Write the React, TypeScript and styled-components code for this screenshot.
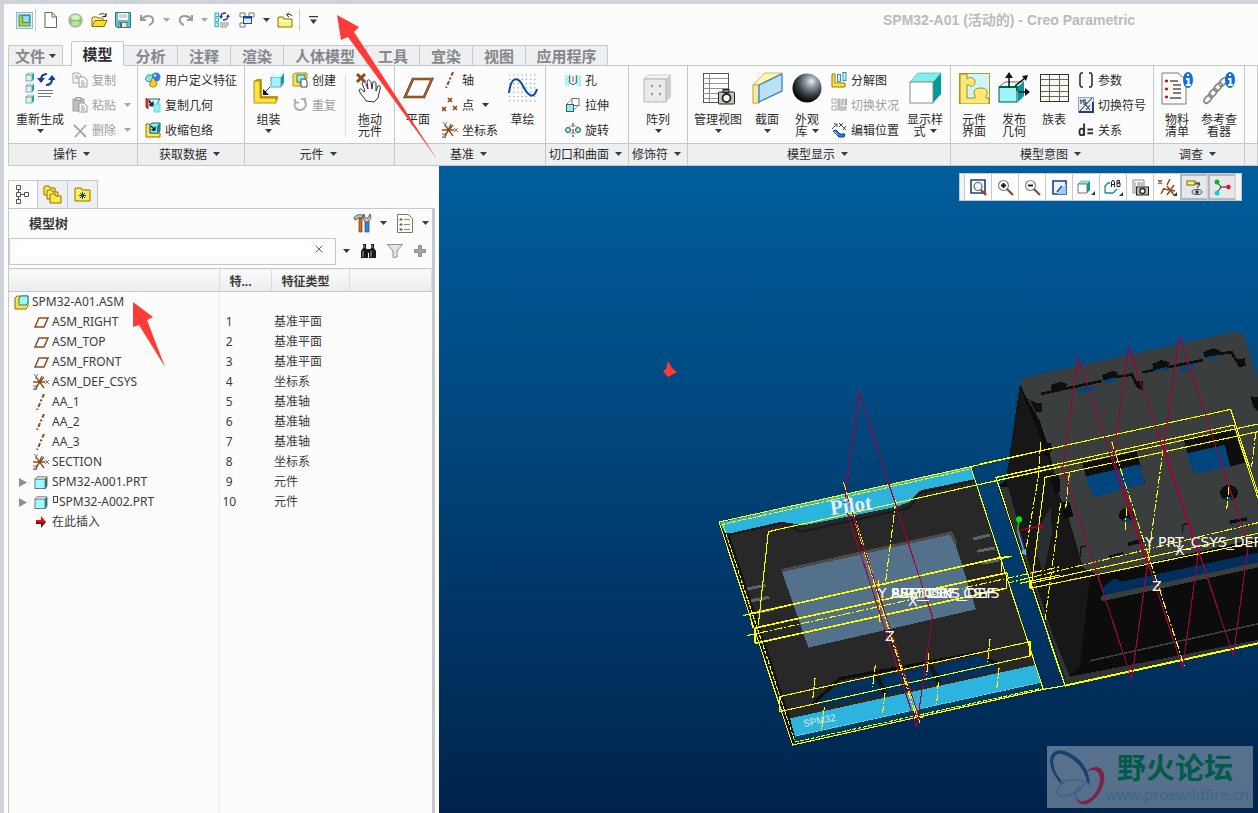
import React from 'react';
import styled, { createGlobalStyle } from 'styled-components';

const sans = '"Noto Sans", "Noto Sans CJK SC", sans-serif';
const cjk = '"Noto Sans CJK SC", "Noto Sans", sans-serif';
const line = '#c6c9cc';

const Global = createGlobalStyle`
  *, *::before, *::after { box-sizing: border-box; }
  body { margin: 0; background: #fcfcfc; overflow: hidden; }
  button, input, table { font: inherit; color: inherit; }
  button { margin: 0; padding: 0; border: 0; background: none; cursor: pointer; }
`;

const Frame = styled.div`
  position: relative;
  display: flex;
  flex-direction: column;
  min-height: 100vh;
  background: #fcfcfc;
  border-top: 4px solid #cdd3d8;
  border-left: 4px solid #cdd3d8;
  box-shadow: inset 1px 1px 0 #fff;
  font: 12px/12px ${cjk};
  color: #2b2b2b;
  overflow: hidden;
`;

/* ---------- title bar ---------- */

const TitleBar = styled.header`
  display: flex;
  align-items: center;
  height: 32px;
  padding-left: 11px;
`;
const QuickButton = styled.button<{ $w?: number }>`
  display: flex;
  align-items: center;
  justify-content: center;
  width: ${(p) => p.$w ?? 24}px;
  height: 22px;
`;
const QuickDivider = styled.span`
  width: 1px;
  height: 22px;
  margin: 0 2px;
  background: #c9cccf;
`;
const WindowTitle = styled.h1`
  flex: 1;
  margin: 0;
  padding-left: 559px;
  white-space: nowrap;
  font: bold 14px/16px "Liberation Sans", "Noto Sans CJK SC", sans-serif;
  color: #b9bbbd;
`;

/* ---------- ribbon ---------- */

const Tabs = styled.nav`
  display: flex;
  align-items: flex-end;
  height: 30px;
  padding-left: 4px;
  margin-bottom: -1px;
  position: relative;
  z-index: 1;
`;
const Tab = styled.button<{ $active?: boolean; $w: number; $gap?: number }>`
  display: flex;
  align-items: center;
  justify-content: center;
  gap: 4px;
  width: ${(p) => p.$w}px;
  height: ${(p) => (p.$active ? 25 : 21)}px;
  margin-right: ${(p) => p.$gap ?? 0}px;
  border: 1px solid ${line};
  border-left-width: ${(p) => (p.$active || p.$gap ? 1 : 0)}px;
  border-bottom-color: ${(p) => (p.$active ? '#fcfcfc' : line)};
  border-radius: ${(p) => (p.$active ? '2px 2px 0 0' : 0)};
  background: ${(p) => (p.$active ? '#fcfcfc' : '#eeeff1')};
  font: bold 15px/18px ${cjk};
  color: ${(p) => (p.$active ? '#2f2f33' : '#85878c')};
  white-space: nowrap;
`;
const Ribbon = styled.section`
  display: flex;
  margin-left: 4px;
  height: 101px;
  border: 1px solid ${line};
  border-right: 0;
`;
const Group = styled.div<{ $w?: number }>`
  display: flex;
  flex-direction: column;
  ${(p) => (p.$w ? `width: ${p.$w}px; flex: none;` : 'flex: 1;')}
  border-right: 1px solid ${line};
`;
const GroupBody = styled.div<{ $pad?: number }>`
  display: flex;
  height: 77px;
  padding-left: ${(p) => p.$pad ?? 0}px;
`;
const GroupLabel = styled.button`
  display: flex;
  align-items: center;
  justify-content: center;
  gap: 6px;
  height: 22px;
  padding: 0 3px 2px 0;
  border-top: 1px solid ${line};
  background: #eeeff1;
  line-height: 18px;
  white-space: nowrap;
`;
const BigTool = styled.button<{ $w: number }>`
  display: flex;
  flex: none;
  flex-direction: column;
  align-items: center;
  width: ${(p) => p.$w}px;
  padding-top: 5px;
  white-space: nowrap;
`;
const BigIcon = styled.span`
  display: flex;
  align-items: center;
  justify-content: center;
  height: 34px;
  margin-bottom: 8px;
`;
const LabelLine = styled.span`
  display: flex;
  align-items: center;
  justify-content: center;
  gap: 4px;
  height: 12px;
`;
const Stack = styled.div<{ $w: number; $pad?: number }>`
  display: flex;
  flex: none;
  flex-direction: column;
  gap: 1px;
  width: ${(p) => p.$w}px;
  padding: 2px 0 0 ${(p) => p.$pad ?? 0}px;
`;
const SmallTool = styled.button<{ $off?: boolean }>`
  display: flex;
  align-items: center;
  gap: 4px;
  height: 24px;
  color: ${(p) => (p.$off ? '#9c9ea0' : 'inherit')};
  white-space: nowrap;
`;
const IconSlot = styled.span`
  display: flex;
  flex: none;
  justify-content: center;
  width: 16px;
`;
const BodyDivider = styled.span`
  width: 1px;
  margin: 8px 0 6px;
  background: #dcdee0;
`;
const CaretSlot = styled.span`
  display: flex;
  margin-left: 4px;
`;

/* ---------- work area ---------- */

const Work = styled.main`
  display: flex;
  flex: 1;
`;
const TreePane = styled.aside`
  display: flex;
  flex: none;
  flex-direction: column;
  width: 427px;
  margin: 14px 4px 0 4px;
`;
const PaneTabs = styled.div`
  display: flex;
  height: 29px;
  margin-bottom: -1px;
`;
const PaneTab = styled.button<{ $active?: boolean }>`
  display: flex;
  align-items: center;
  justify-content: center;
  width: 30px;
  border: 1px solid ${line};
  border-left-width: ${(p) => (p.$active ? 1 : 0)}px;
  border-bottom-color: ${(p) => (p.$active ? '#fcfcfc' : line)};
  background: ${(p) => (p.$active ? '#fcfcfc' : '#eeeff1')};
`;
const PaneBody = styled.div`
  display: flex;
  flex: 1;
  flex-direction: column;
  border: 1px solid ${line};
  border-right: 3px solid ${line};
  border-bottom: 0;
`;
const PaneHead = styled.div`
  display: flex;
  align-items: center;
  height: 28px;
  padding-left: 20px;
`;
const PaneTitle = styled.h2`
  flex: 1;
  margin: 0;
  font: bold 13px/16px ${cjk};
  color: #3a3a3a;
`;
const PaneIcon = styled.button<{ $w: number }>`
  display: flex;
  align-items: center;
  justify-content: center;
  width: ${(p) => p.$w}px;
  height: 22px;
`;
const SearchRow = styled.div`
  display: flex;
  align-items: center;
  height: 28px;
`;
const SearchBox = styled.div`
  display: flex;
  flex: 1;
  align-items: flex-start;
  height: 27px;
  padding: 2px 4px 0 7px;
  border: 1px solid ${line};
`;
const SearchInput = styled.input`
  flex: 1;
  height: 16px;
  border: 0;
  outline: 0;
  background: #fff;
`;
const ClearButton = styled.button`
  width: 20px;
  height: 16px;
`;
const Tree = styled.table`
  width: 100%;
  margin-top: 3px;
  border-top: 1px solid ${line};
  border-collapse: collapse;
  table-layout: fixed;
  font: 12px/20px ${sans};
  color: #3b3b3b;
  th {
    height: 23px;
    padding: 3px 0 0 10px;
    border-bottom: 1px solid ${line};
    border-right: 1px solid #dadcde;
    background: linear-gradient(#fbfbfb, #ebecee);
    text-align: left;
    line-height: 19px;
  }
  td {
    height: 20px;
    padding: 0;
    white-space: nowrap;
  }
  td:first-child { border-right: 1px solid #e8e9eb; }
  td:nth-child(2) { padding-right: 32px; text-align: center; }
  td:nth-child(3) { padding-left: 3px; }
`;
const TreeSpace = styled.div`
  flex: 1;
  width: 211px;
  border-right: 1px solid #e8e9eb;
`;
const NodeName = styled.span<{ $depth: number }>`
  display: flex;
  align-items: center;
  gap: 3px;
  height: 20px;
  padding-left: ${(p) => (p.$depth ? 10 : 5)}px;
`;
const Expander = styled.span`
  display: flex;
  width: 11px;
`;
const Marker = styled.span`
  width: 5px;
  height: 7px;
  margin: 0 -2px 6px 1px;
  border: 1px solid #444;
`;

const Viewport = styled.section`
  position: relative;
  flex: 1;
  min-width: 0;
  overflow: hidden;
  background: linear-gradient(#005e9e, #00234c);
`;
const Scene = styled.svg`
  position: absolute;
  left: 0;
  top: 0;
  display: block;
`;
const ViewTools = styled.div`
  position: absolute;
  top: 7px;
  right: 16px;
  display: flex;
  height: 28px;
  padding: 0 5px 0 4px;
  border: 1px solid ${line};
  background: #f4f4f5;
`;
const ViewTool = styled.button<{ $on?: boolean }>`
  display: flex;
  align-items: center;
  justify-content: center;
  width: ${(p) => (p.$on ? 28 : 27)}px;
  border-left: 1px solid ${line};
  background: #fff;
  ${(p) => p.$on && 'background: #e6e7e9; border: 2px solid #b4b7ba; border-right-color: #d5d7d9;'}
`;
const Watermark = styled.a`
  position: absolute;
  right: 5px;
  bottom: 5px;
  display: flex;
  width: 206px;
  height: 62px;
  background: rgba(255, 255, 255, 0.34);
  text-decoration: none;
`;
const WatermarkLogo = styled.svg`
  flex: none;
  margin-right: -1px;
`;
const WatermarkText = styled.span`
  display: flex;
  flex-direction: column;
  align-items: flex-start;
  color: #3f668a;
  font: 15px/18px ${sans};
  strong {
    margin-left: 12px;
    height: 39px;
    font: bold 29px/40px ${cjk};
    color: #005c48;
    white-space: nowrap;
  }
`;
const Annotations = styled.svg`
  position: absolute;
  left: -4px;
  top: -4px;
  z-index: 5;
  pointer-events: none;
`;

/* ---------- icons ---------- */

const Glyph = styled.svg`
  display: block;
  flex: none;
`;

const Caret = ({ off }: { off?: boolean }) => (
  <Glyph width="7" height="4" viewBox="0 0 7 4" aria-hidden="true">
    <path d="M0 0h7L3.500 4z" fill={off ? '#a5a7a9' : '#3a3a3a'} />
  </Glyph>
);

const cube = (x: number, y: number, s: number) => (
  <g>
    <path d={`M${x} ${y + 2}l2-2h${s}v${s}l-2 2z`} fill="#0aa" />
    <path d={`M${x} ${y + 2}l2-2h${s}l-2 2z`} fill="#e4ffff" stroke="#8a8a8a" strokeWidth=".6" />
    <rect x={x} y={y + 2} width={s} height={s} fill="#c4fcff" stroke="#8a8a8a" strokeWidth=".8" />
  </g>
);
const folder = (x: number, y: number) => (
  <path d={`M${x} ${y + 9}v-8l1-1h4l1 2h5v7z`} fill="#ffe94a" stroke="#8a7200" strokeWidth="1" />
);
const brown = '#8e4a1c';

const icons: Record<string, { w: number; h?: number; box: string; art: React.ReactNode }> = {
  app: { w: 17, box: '0 0 17 17', art: <>
    <rect x=".5" y=".5" width="16" height="16" fill="#dcebf2" stroke="#9db6c4" />
    <rect x="3" y="3" width="11" height="11" fill="#c3d000" stroke="#2b93b0" />
    <rect x="6.500" y="3.500" width="7" height="7" fill="#9fdcea" stroke="#2b93b0" strokeWidth="1.200" /></> },
  newFile: { w: 14, h: 16, box: '0 0 14 16', art: <path d="M1 .5h7l4.500 4.500v10.500H1zM8 .5V5h4.500" fill="#fff" stroke="#666" /> },
  ball: { w: 15, box: '0 0 15 15', art: <>
    <circle cx="7.500" cy="7.500" r="6.500" fill="#8cc76a" stroke="#b4b5b4" strokeWidth="1.500" />
    <ellipse cx="7.500" cy="4.500" rx="4.500" ry="2.500" fill="#d4efc4" /><ellipse cx="7.500" cy="10.500" rx="4" ry="2.300" fill="#b7e39a" /></> },
  open: { w: 17, h: 16, box: '0 0 17 16', art: <>
    <path d="M1 14V6l1-1h4l1 1h5v3" fill="#fff3a0" stroke="#8a7200" />
    <path d="M1 14.500l3-6h12l-3 6z" fill="#ffd92e" stroke="#8a7200" />
    <path d="M8 3c2-2 5-2 7 1M15 1v3.500h-3.500" fill="none" stroke="#222" /></> },
  save: { w: 16, box: '0 0 16 16', art: <>
    <path d="M.5.5h15v15H2l-1.500-1.500z" fill="#5cc3c8" stroke="#2b7f84" />
    <rect x="3" y="1" width="10" height="7" fill="#fff" /><path d="M4 3h8M4 5h8" stroke="#aaa" />
    <rect x="4" y="10.500" width="8" height="5" fill="#e5e5e5" stroke="#555" strokeWidth=".7" /><path d="M6 11v4" stroke="#333" strokeWidth="1.500" /></> },
  undo: { w: 17, h: 14, box: '0 0 17 14', art: <path d="M3 6c3-4 10-4 11 0s-2 5-4 6M2 2v5h5" fill="none" stroke="#9a9c9e" strokeWidth="2" /> },
  redo: { w: 17, h: 14, box: '0 0 17 14', art: <path d="M14 6c-3-4-10-4-11 0s2 5 4 6M15 2v5h-5" fill="none" stroke="#9a9c9e" strokeWidth="2" /> },
  regenSmall: { w: 16, box: '0 0 16 16', art: <>
    {[0, 5, 10].map((y) => <rect key={y} x="1" y={y + 1} width="3.500" height="3.500" fill="#b4fbff" stroke="#199" strokeWidth=".8" />)}
    <path d="M7 4c0-3 3-3 5-3M14 4c0 3-2 4-5 4" fill="none" stroke="#1a4a9e" strokeWidth="1.500" />
    <path d="M5 4h4L7 7zM12 5h4l-2-3z" fill="#1a4a9e" /><path d="M6 11h9M6 13h9M6 15h7" stroke="#888" /></> },
  windows: { w: 16, box: '0 0 16 16', art: <>
    <path d="M1 1h5v4H1zM1 11h5v4H1zM10 1h5v4h-5z" fill="#fff" stroke="#777" />
    <rect x="4.500" y="4.500" width="8" height="7" fill="#dfe9ff" stroke="#1a4a9e" /><path d="M4 5.500h9" stroke="#1a4a9e" strokeWidth="2" /></> },
  closeDir: { w: 17, h: 16, box: '0 0 17 16', art: <>
    <path d="M1 15V6l1-1h4l1 2h8v8z" fill="#fff27a" stroke="#8a7200" /><path d="M2 9h12" stroke="#fffbd0" strokeWidth="2" />
    <path d="M10 3c2-1 4-1 5 1M12 .5L9.500 3 12 5" fill="none" stroke="#222" /></> },
  more: { w: 9, h: 8, box: '0 0 9 8', art: <path d="M0 0h9v1.200H0zM1 3.500h7L4.500 8z" fill="#3a3a3a" /> },
  regen: { w: 30, h: 32, box: '0 0 30 32', art: <>
    {cube(1, 1, 6)}{cube(1, 12, 6)}{cube(1, 23, 6)}
    <path d="M16 8C16 4 18 2 22 2M27 7C27 11 25 13 21 13" fill="none" stroke="#143f9a" strokeWidth="2.200" />
    <path d="M12 6h8l-4 5zM23 8h8l-4-5z" fill="#143f9a" />
    <path d="M13 18.500h15M13 21.500h15M13 24.500h13" stroke="#777" /></> },
  copy: { w: 16, box: '0 0 16 16', art: <>
    <path d="M1 1h6l2 2v8H1z" fill="#f4f4f4" stroke="#a6a8aa" /><path d="M7 5h5l3 3v7H7z" fill="#fff" stroke="#999" />
    <path d="M3 4h3M3 6h3M9 9h3M9 11h4M9 13h4" stroke="#999" /></> },
  paste: { w: 16, box: '0 0 16 16', art: <>
    <rect x="1" y="2" width="11" height="12" fill="#bcbec0" stroke="#a0a2a4" /><rect x="4" y=".5" width="5" height="3" fill="#ddd" stroke="#999" />
    <path d="M7 6h5l3 3v6H7z" fill="#fff" stroke="#999" /><path d="M9 9h3M9 11h4M9 13h4" stroke="#999" /></> },
  del: { w: 16, box: '0 0 16 16', art: <path d="M2 3l12 12M14 3L3 15" stroke="#a4a6a8" strokeWidth="1.800" fill="none" /> },
  udf: { w: 16, box: '0 0 16 16', art: <>
    <circle cx="11" cy="5" r="4.500" fill="#2f7be0" /><circle cx="10" cy="3.500" r="1.300" fill="#cfe6ff" />
    <path d="M0 7l3-4h5l-1 6-4 1z" fill="#7ceaf0" stroke="#16838a" strokeWidth=".8" />
    <path d="M8 5l4 6c0 3-2 4-4 4s-4-1-3-4z" fill="#f5cf2b" stroke="#8a6a00" strokeWidth=".8" /></> },
  copyGeom: { w: 16, box: '0 0 16 16', art: <>
    <path d="M1 1l2 2v9l-2-2z" fill="#d22" stroke="#d22" /><path d="M3 2h12l-2 3v4H5V4z" fill="#cfffff" stroke="#0a6a70" />
    <path d="M4 4l4 4M8 4.500V8H4.500" stroke="#111" strokeWidth="1.300" fill="none" /><rect x="9" y="7" width="6" height="8" fill="#8feff5" stroke="#6dd" /></> },
  shrink: { w: 16, box: '0 0 16 16', art: <>
    <path d="M1 2h4v9h10v4H1z" fill="#ffe65a" stroke="#8a7200" /><path d="M5 3l2-2h8v8l-2 2H5z" fill="#8feff5" stroke="#0a6a70" /><path d="M12 4l3-3v8l-3 2z" fill="#0a8a90" />
    <path d="M6 4l4 4M10 4.500V8H6.500" stroke="#111" strokeWidth="1.300" fill="none" /></> },
  assemble: { w: 32, h: 33, box: '0 0 32 33', art: <>
    <path d="M1 9l3-2h5v17h16v3l-3 4H1z" fill="#c89a10" /><path d="M1 9h6v17h16v5H1z" fill="#ffe343" stroke="#9a7800" strokeWidth=".8" />
    <path d="M18 5l3-4h10v10l-3 4H18z" fill="#1a9aa5" /><path d="M18 5h10v10H18z" fill="#a2f3ff" stroke="#4e8f99" strokeWidth=".8" /><path d="M18 5l3-4h10l-3 4z" fill="#dffdff" />
    <path d="M17 15l-5 5" stroke="#333" /><path d="M10 17v6h6z" fill="#111" /></> },
  create: { w: 16, box: '0 0 16 16', art: <>
    <path d="M1 3l2-2h12v6H8v7H1z" fill="#ffe343" stroke="#b09020" /><rect x="5" y="3" width="8" height="7" fill="#9ff4f8" stroke="#16838a" />
    <path d="M9 7h4l2 2v6H9z" fill="#fff" stroke="#444" /></> },
  repeat: { w: 16, box: '0 0 16 16', art: <path d="M4 4c-3 4-1 9 4 9s8-6 4-10M3 2v3.500h4M9 2h4v4" fill="none" stroke="#aeb0b2" strokeWidth="2" /> },
  drag: { w: 32, h: 34, box: '0 0 32 34', art: <>
    <path d="M3 3l8 8M11 3l-8 8" stroke={brown} strokeWidth="3" />
    <path d="M12 30c-2-4-6-7-7-11 1-2 3-1 5 2l1-1-3-8c1-2 3-1 4 1l2 5-1-8c1-2 3-1 4 1l1 7 1-7c2-1 3 0 3 2l0 7 2-5c2-1 3 1 2 3l-2 9-4 4z" fill="#fff" stroke="#333" strokeWidth="1" /></> },
  plane: { w: 31, h: 22, box: '0 0 31 22', art: <><path d="M10 2h19l-8 18H2z" fill="#fff" stroke="#6b3410" strokeWidth="2.600" /><path d="M10 2h19l-8 18H2z" fill="none" stroke="#b77a45" strokeWidth="1" /></> },
  axis: { w: 16, box: '0 0 16 16', art: <path d="M11 0L4 16" stroke={brown} strokeWidth="2" strokeDasharray="4 2 2 2" /> },
  points: { w: 16, box: '0 0 16 16', art: <path d="M6 1l4 4M10 1L6 5M0 10l4 4M4 10l-4 4M11 9l4 4M15 9l-4 4" stroke={brown} strokeWidth="1.700" /> },
  csys: { w: 16, box: '0 0 16 16', art: <>
    <path d="M0 8h12M3 3l8 11M9 2L3 15M11 3l-8 10" stroke={brown} strokeWidth="1.300" />
    <path d="M12 6l4 4M16 6l-4 4M1 0l2 2.500L5 0M3 2v3M0 12h4l-4 3.500h4" stroke="#777" fill="none" /></> },
  sketch: { w: 30, h: 28, box: '0 0 30 28', art: <>
    {[0, 1, 2, 3, 4, 5, 6].map((r) => <path key={r} d={`M1 ${1 + r * 4.3}h29`} stroke="#8aa0b4" strokeWidth="1.200" strokeDasharray="1.200 3" />)}
    <path d="M1 19C3 2 10 2 15 12s11 14 14 3" fill="none" stroke="#10489c" strokeWidth="2" /></> },
  hole: { w: 16, h: 13, box: '0 0 17 13', art: <>
    <path d="M0 1h5v11H0zM12 1h5v11h-5z" fill="#8ff1f5" /><path d="M0 5l4-4M0 9l4-4M1 12l4-4M12 5l4-4M12 9l5-4M13 12l4-4" stroke="#fff" />
    <path d="M5 1v8l3.500 2L12 9V1M8.500 2v6" fill="none" stroke="#444" /></> },
  extrude: { w: 16, box: '0 0 16 16', art: <>
    <path d="M2 7l5-5M8 7l6-5M8 14l6-6" stroke="#777" strokeDasharray="2 1" /><rect x="7" y="1.500" width="7" height="7" fill="#fff" stroke="#777" />
    <rect x="1.500" y="7.500" width="7" height="7" fill="#8feff5" stroke="#555" /></> },
  revolve: { w: 16, box: '0 0 16 16', art: <>
    <path d="M8 1v14" stroke="#222" strokeDasharray="4 2" /><circle cx="3" cy="8" r="2.500" fill="#8feff5" stroke="#444" /><circle cx="13" cy="8" r="2.500" fill="#8feff5" stroke="#444" />
    <path d="M4 5c2-2 6-2 8 0M5 11c2 1 4 1 6 0" fill="none" stroke="#999" /></> },
  pattern: { w: 30, h: 30, box: '0 0 30 30', art: <>
    <path d="M1 6l5-4h22v22l-5 5z" fill="#cfcfcf" /><path d="M1 6l5-4h22l-5 4z" fill="#f4f4f4" stroke="#bbb" strokeWidth=".7" /><rect x="1" y="6" width="22" height="23" fill="#e9e9e9" stroke="#b5b5b5" />
    <path d="M7 11h4v4H7zM15 11h4v4h-4zM7 19h4v4H7zM15 19h4v4h-4z" fill="#a8a8a8" stroke="#fff" /></> },
  manage: { w: 33, h: 34, box: '0 0 33 34', art: <>
    <rect x="1.500" y="2.500" width="25" height="29" fill="#fff" stroke="#555" /><path d="M1 7.500h25M1 12.500h25M1 17.500h25M1 22.500h25M1 27.500h25M7.500 2v29" stroke="#888" strokeWidth=".9" />
    <rect x="16.500" y="21" width="16" height="12" rx="1" fill="#c9c6b4" stroke="#222" /><rect x="21" y="18.500" width="6" height="3" fill="#888" stroke="#222" /><circle cx="24.500" cy="27" r="4" fill="#fff" stroke="#222" strokeWidth="1.800" /></> },
  section: { w: 31, h: 32, box: '0 0 31 32', art: <>
    <path d="M1 13L13 1h17v0L7 13z" fill="#fff8b0" stroke="#d5be5b" /><path d="M1 13h6v18H1z" fill="#f5e9a8" stroke="#d5be5b" strokeWidth="1.500" />
    <path d="M7 13L30 2v17L7 30z" fill="#b9e3f5" stroke="#3d7fc4" strokeWidth="1.300" /></> },
  sphere: { w: 30, box: '0 0 31 31', art: <>
    <defs><radialGradient id="ball" cx=".65" cy=".27" r=".7"><stop offset="0" stopColor="#e8edf0" /><stop offset=".3" stopColor="#8b979f" /><stop offset=".65" stopColor="#3c444a" /><stop offset="1" stopColor="#080808" /></radialGradient></defs>
    <circle cx="15.500" cy="15.500" r="15" fill="url(#ball)" /></> },
  explode: { w: 16, box: '0 0 16 16', art: <>
    <path d="M1 2h3v9h10v4H1z" fill="#ffe343" stroke="#9a7800" /><rect x="6.500" y="2.500" width="3" height="7" fill="#bff8ff" stroke="#3a8fa0" /><rect x="12" y=".5" width="3" height="8" fill="#bff8ff" stroke="#3a8fa0" /></> },
  state: { w: 16, box: '0 0 16 16', art: <>
    <rect x="1" y="2" width="4" height="4" fill="#fff" stroke="#aaa" /><rect x="1" y="9" width="4" height="4" fill="#fff" stroke="#aaa" /><path d="M7 2h2v8h6v3H7zM11 2h1v6h-1zM14 2h1.500v6H14z" fill="#ccc" stroke="#aaa" /></> },
  editPos: { w: 16, box: '0 0 16 16', art: <>
    <path d="M1 7l4-4M3 2h3v3M8 1l4 4M12 1L8 5M12 5l3 3M15 4l-3 4" stroke="#444" fill="none" /><path d="M2 9l3-1 4 4h5l-1 3H8z" fill="#3474d8" stroke="#143f9a" /><path d="M3 9l4 4" stroke="#cfe3ff" /></> },
  display: { w: 33, h: 32, box: '0 0 33 32', art: <>
    <path d="M24 10l8-9v21l-8 9z" fill="#009a9a" /><path d="M1 10l8-9h23l-8 9z" fill="#7ff0f0" stroke="#4aa" strokeWidth=".6" /><rect x="1" y="10" width="23" height="21" fill="#fff" stroke="#8a8a8a" /></> },
  puzzle: { w: 31, box: '0 0 31 31', art: <>
    <rect x=".5" y=".5" width="30" height="30" fill="#cdf6fb" stroke="#b79a20" />
    <path d="M1 1h7v5c3-3 8-1 8 3s-4 6-6 3H8v13h8v-2c-3-6 1-8 6-8s8 3 5 8v2h3v6H1z" fill="#ffe878" stroke="#a88a10" /></> },
  publish: { w: 32, box: '0 0 32 32', art: <>
    <path d="M1 15l6-5h19l-6 5z" fill="#fff" stroke="#666" /><path d="M20 15l6-5v14l-6 6z" fill="#009a9a" /><rect x="1" y="15" width="18" height="15" fill="#9ff6f8" stroke="#055" /><path d="M1 15h18v4" stroke="#064" strokeWidth="2" fill="none" />
    <path d="M11 15V4M17 14L27 6M20 20h9" stroke="#111" strokeWidth="1.500" /><path d="M11 0l4 6H7zM24 4l6-1-2 6zM27 16v8l5-4z" fill="#111" /></> },
  family: { w: 29, h: 28, box: '0 0 29 28', art: <>
    <rect x=".5" y=".5" width="28" height="27" fill="#fafaf0" stroke="#333" /><path d="M1 5.500h27M1 11.500h27M1 17.500h27M1 22.500h27M9.500 1v26M19.500 1v26" stroke="#666" /></> },
  params: { w: 16, box: '0 0 16 16', art: <path d="M5 1H3L2 3v10l1 2h2M11 1h2l1 2v10l-1 2h-2" fill="none" stroke="#333" strokeWidth="1.600" /> },
  symbols: { w: 16, box: '0 0 16 16', art: <>
    <rect x=".5" y=".5" width="15" height="15" fill="#e3ecf7" stroke="#8ea6c4" /><path d="M1 15h14V5" fill="none" stroke="#17418a" strokeWidth="2" />
    <path d="M2 3h1v4M5 3h3M5 3v2h3v2H5M1 15L14 1M8 8l4 5M12 8l-4 5" stroke="#222" fill="none" /></> },
  relations: { w: 16, box: '0 0 17 16', art: <><path d="M6.500 1v13M10 7.500h6M10 11.500h6" stroke="#333" strokeWidth="2" fill="none" /><ellipse cx="4" cy="10" rx="2.500" ry="3.500" fill="none" stroke="#333" strokeWidth="2" /></> },
  bom: { w: 32, h: 33, box: '0 0 32 33', art: <>
    <path d="M1 1h16l8 7v24H1z" fill="#fffef8" stroke="#777" /><path d="M4 9h3M4 17h3M4 25h3" stroke="#d11" strokeWidth="2.500" /><path d="M9 9h8M12 13h8M12 17h8M12 21h8M9 26h11" stroke="#555" strokeWidth="1.500" />
    <ellipse cx="27" cy="8" rx="5" ry="8" fill="#0d6fe8" /><path d="M25 7h2.500v6M25 13h5M26 3h2" stroke="#fff" strokeWidth="2" fill="none" /></> },
  refs: { w: 32, h: 33, box: '0 0 32 33', art: <>
    {[[5, 27], [10, 21], [15, 15], [20, 10]].map(([x, y]) => <ellipse key={x} cx={x} cy={y} rx="5" ry="2.700" transform={`rotate(-48 ${x} ${y})`} fill="none" stroke="#888" strokeWidth="1.700" />)}
    <ellipse cx="27" cy="8" rx="5" ry="8" fill="#0d6fe8" /><path d="M25 7h2.500v6M25 13h5M26 3h2" stroke="#fff" strokeWidth="2" fill="none" /></> },
  treeTab: { w: 14, h: 19, box: '0 0 14 19', art: <path d="M.5.5h4v4h-4zM.5 7.500h4v4h-4zM.5 14.500h4v4h-4zM8.500 7.500h4v4h-4zM2.500 5v2M2.500 12v2M5 9.500h3" fill="#fff" stroke="#555" /> },
  folders: { w: 19, box: '0 0 19 19', art: <>{folder(1, 1)}{folder(4, 5)}{folder(7, 9)}</> },
  favorites: { w: 17, h: 15, box: '0 0 17 15', art: <>
    <path d="M1 14V2l1-1h5l1 2h8v11z" fill="#fff04a" stroke="#8a7200" /><path d="M8.500 5v7M5 8.500h7M6 6l5 5M11 6l-5 5" stroke="#103d9a" /></> },
  tools: { w: 19, h: 20, box: '0 0 19 20', art: <>
    <path d="M1 5c1-3 5-4 9-3v3H6L2 7z" fill="#b7bcc0" stroke="#444" strokeWidth=".8" /><path d="M6 5h3v14H6z" fill="#d86a1c" stroke="#7a3508" strokeWidth=".7" />
    <path d="M12 8h4v11h-4z" fill="#2f86e0" stroke="#104a90" strokeWidth=".7" /><path d="M11 1l1 4h3l2-4 1 4-3 4h-3l-2-4z" fill="#c3c8cc" stroke="#444" strokeWidth=".8" /></> },
  listSet: { w: 17, h: 19, box: '0 0 17 19', art: <>
    <path d="M.5.5h11l4 4v14H.5z" fill="#fffef4" stroke="#777" /><path d="M3 5h2v1H3zM3 10h2v1H3zM3 15h2v1H3z" fill="none" stroke="#555" /><path d="M7 5.500h6M7 10.500h6M7 15.500h6" stroke="#888" /></> },
  find: { w: 17, h: 15, box: '0 0 17 15', art: <>
    <path d="M3 0h3v4l2 3v7H1V7l2-3zM11 0h3v4l2 3v7H9V7l2-3z" fill="#1a1a1a" /><path d="M7 5h3v4H7z" fill="#1a1a1a" /><path d="M3 7v6M11 7v6M4 1v3M12 1v3" stroke="#aaa" /></> },
  funnel: { w: 16, h: 14, box: '0 0 16 14', art: <path d="M.5.5h15L10 7v6l-4 .5V7z" fill="#e4e5e6" stroke="#8f9193" /> },
  plus: { w: 12, box: '0 0 12 12', art: <path d="M4.500.5h3v4h4v3h-4v4h-3v-4h-4v-3h4z" fill="#a3a5a7" stroke="#8a8c8e" /> },
  cross: { w: 8, box: '0 0 8 8', art: <path d="M.5.5l7 7M7.500.5l-7 7" stroke="#666" /> },
  asm: { w: 15, h: 15, box: '0 0 15 15', art: <>
    <path d="M1 3l2-2h11v10l-2 3H1z" fill="#ffe343" stroke="#8a7200" /><path d="M5 3l2-2h7v7l-2 2H5z" fill="#9ff6ff" stroke="#16838a" /></> },
  part: { w: 15, h: 13, box: '0 0 15 13', art: <>
    <path d="M1 3l2-2h10v9l-2 3z" fill="#088" stroke="#444" strokeWidth=".7" /><rect x="1" y="3" width="10" height="9.500" fill="#9ff" stroke="#777" /><path d="M1 3l2-2h10l-2 2z" fill="#e8ffff" stroke="#777" strokeWidth=".7" /></> },
  datum: { w: 15, h: 11, box: '0 0 15 11', art: <path d="M5 1h9L10 10H1z" fill="#fff" stroke={brown} strokeWidth="1.500" /> },
  insert: { w: 12, h: 12, box: '0 0 12 12', art: <><path d="M1 4h5V0l5 6H1z" fill="#e01010" /><path d="M1 8h5v4l5-6H1z" fill="#8a0000" /></> },
  expand: { w: 8, h: 9, box: '0 0 8 9', art: <path d="M0 0l8 4.500L0 9z" fill="#8d8f91" /> },
  zoomFit: { w: 17, box: '0 0 17 17', art: <>
    <path d="M1 1h14v13H1z" fill="#fff" stroke="#17418a" strokeWidth="1.600" /><circle cx="8" cy="7.500" r="4" fill="#eef8ff" stroke="#666" strokeWidth="1.200" /><path d="M11 11l5 5" stroke={brown} strokeWidth="2.400" /></> },
  zoomIn: { w: 17, box: '0 0 17 17', art: <><circle cx="6.500" cy="6.500" r="5" fill="#f5fbff" stroke="#888" strokeWidth="1.200" /><path d="M4 6.500h5M6.500 4v5" stroke="#111" strokeWidth="1.800" /><path d="M10 10l6 6" stroke={brown} strokeWidth="2.200" /></> },
  zoomOut: { w: 17, box: '0 0 17 17', art: <><circle cx="6.500" cy="6.500" r="5" fill="#f5fbff" stroke="#888" strokeWidth="1.200" /><path d="M4 6.500h5" stroke="#111" strokeWidth="1.800" /><path d="M10 10l6 6" stroke={brown} strokeWidth="2.200" /></> },
  repaint: { w: 15, box: '0 0 15 15', art: <><path d="M1 1h13v13H1z" fill="#e9f4ff" stroke="#17418a" strokeWidth="1.600" /><path d="M14 4v10H5z" fill="#9cc8f5" /><path d="M10 6L5 12" stroke="#1c55b0" strokeWidth="1.800" /></> },
  shading: { w: 18, h: 16, box: '0 0 18 16', art: <><path d="M10 5l3-3v9l-3 3z" fill="#089a9a" /><path d="M1 5l3-3h9l-3 3z" fill="#7ff0f0" stroke="#4aa" strokeWidth=".6" /><path d="M1 5h9v9H1z" fill="#fff" stroke="#777" /><path d="M18 12v4h-4z" fill="#333" /></> },
  named: { w: 19, h: 17, box: '0 0 19 17', art: <><path d="M1 14V7l3-3h2M1 14h8l4-4" fill="none" stroke="#198a90" strokeWidth="1.300" /><path d="M7.500 8V3l1.500-2 1.500 2v5M7 5.500h3M13 1.500h2.500v2.500H13zM13 4h3v3.500h-3z" fill="none" stroke="#222" /><path d="M19 13v4h-4z" fill="#333" /></> },
  viewMgr: { w: 17, box: '0 0 17 17', art: <><path d="M1 1h11v13H1z" fill="#fff" stroke="#888" /><path d="M3 3v10M5 4h6M5 6h6" stroke="#888" /><rect x="4.500" y="8" width="12" height="8" fill="#bbb9a8" stroke="#222" /><circle cx="10.500" cy="12" r="2.500" fill="#fff" stroke="#222" strokeWidth="1.300" /></> },
  datums: { w: 19, h: 17, box: '0 0 19 17', art: <><path d="M0 1l4 4M4 1L0 5M12 0L9 6M6 9l-3 6M6 10l11 2M9 16l7-10M9 7l7 9" stroke={brown} strokeWidth="1.500" fill="none" /><path d="M19 13v4h-4z" fill="#333" /></> },
  annot: { w: 17, box: '0 0 17 17', art: <><rect x="1" y="2" width="8" height="4" fill="#fff36a" stroke="#7a6a00" /><path d="M9 4h5M10 5h4l-3 4" stroke="#222" fill="none" /><ellipse cx="11" cy="13" rx="5" ry="2.500" fill="#cde" stroke="#456" /><circle cx="11" cy="13" r="1.700" fill="#234" /></> },
  spin: { w: 17, box: '0 0 17 17', art: <><path d="M3 3l4 5-4 6M7 8h7" stroke="#222" fill="none" /><circle cx="3" cy="3" r="2.500" fill="#0b2" /><circle cx="14.500" cy="8" r="2.300" fill="#e11" /><circle cx="3" cy="14" r="2.500" fill="#1cd" /></> },
};

const Icon = ({ name }: { name: string }) => {
  const i = icons[name];
  return <Glyph width={i.w} height={i.h ?? i.w} viewBox={i.box} aria-hidden="true">{i.art}</Glyph>;
};

/* ---------- ribbon parts ---------- */

const Big = ({ icon, lines, w, caret }: { icon: string; lines: string[]; w: number; caret?: boolean }) => (
  <BigTool $w={w}>
    <BigIcon><Icon name={icon} /></BigIcon>
    <LabelLine>{lines[0]}</LabelLine>
    {(lines[1] || caret) && <LabelLine>{lines[1]}{caret && <Caret />}</LabelLine>}
  </BigTool>
);
const Small = ({ icon, label, off, caret }: { icon: string; label: string; off?: boolean; caret?: boolean }) => (
  <SmallTool $off={off}>
    <IconSlot><Icon name={icon} /></IconSlot>{label}{caret && <CaretSlot><Caret off={off} /></CaretSlot>}
  </SmallTool>
);
const Section = ({ label, w, pad, children }: { label: string; w: number; pad?: number; children: React.ReactNode }) => (
  <Group $w={w}>
    <GroupBody $pad={pad}>{children}</GroupBody>
    <GroupLabel>{label}<Caret /></GroupLabel>
  </Group>
);

const tabs: { t: string; w: number; active?: boolean }[] = [
  { t: '模型', w: 53, active: true }, { t: '分析', w: 54 }, { t: '注释', w: 53 }, { t: '渲染', w: 53 },
  { t: '人体模型', w: 83 }, { t: '工具', w: 53 }, { t: '宜染', w: 53 }, { t: '视图', w: 53 }, { t: '应用程序', w: 82 },
];

const nodes: { icon: string; name: string; id: string; type: string; open?: boolean; mark?: boolean }[] = [
  { icon: 'datum', name: 'ASM_RIGHT', id: '1', type: '基准平面' },
  { icon: 'datum', name: 'ASM_TOP', id: '2', type: '基准平面' },
  { icon: 'datum', name: 'ASM_FRONT', id: '3', type: '基准平面' },
  { icon: 'csys', name: 'ASM_DEF_CSYS', id: '4', type: '坐标系' },
  { icon: 'axis', name: 'AA_1', id: '5', type: '基准轴' },
  { icon: 'axis', name: 'AA_2', id: '6', type: '基准轴' },
  { icon: 'axis', name: 'AA_3', id: '7', type: '基准轴' },
  { icon: 'csys', name: 'SECTION', id: '8', type: '坐标系' },
  { icon: 'part', name: 'SPM32-A001.PRT', id: '9', type: '元件', open: true },
  { icon: 'part', name: 'SPM32-A002.PRT', id: '10', type: '元件', open: true, mark: true },
  { icon: 'insert', name: '在此插入', id: '', type: '' },
];

/* ---------- 3D scene ---------- */

const Y = '#ffff00';
const R = '#a3003c';

const FrontPanel = () => (
  <g transform="translate(700 370) scale(.33333)" shapeRendering="crispEdges">
    <path d="M60 458L810 290 1028 958 280 1125z" fill="#282828" />
    <path d="M62 470L90 500 290 1100 278 1122z" fill="#131313" />
    <path d="M60 458L812 290 822 328 665 360 650 370 630 395 590 410 312 466 262 458 245 455 90 490 75 488z" fill="#2cb3de" />
    <path d="M88 494L245 459 262 462 300 486 628 414 660 368 824 332" fill="none" stroke="#1b1b1b" strokeWidth="7" />
    <path d="M245 602L745 493 757 493 828 718 325 833z" fill="#54718c" />
    <path d="M245 602L752 489 768 520" fill="none" stroke="#4b4b4b" strokeWidth="9" />
    <path d="M142 657L197 646M153 692L208 682M172 728L222 717M820 507L870 495M832 544L884 534M845 580L897 570" stroke="#5a6466" strokeWidth="9" />
    <path d="M350 1000L420 938 530 918 695 890 830 856 885 882 882 905 720 938 555 973 370 1010z" fill="#003060" />
    <path d="M340 1000L420 926 830 850M860 866L890 880" fill="none" stroke="#0e0e0e" strokeWidth="10" />
    <path d="M530 915L556 975M692 885L718 942" stroke="#141414" strokeWidth="14" />
    <path d="M270 1045L1005 885 1022 938 285 1100z" fill="#2cb3de" />
    <path d="M285 1100L1022 938 1028 958 280 1124z" fill="#003c5e" />
    <path d="M290 1097L1022 937" stroke="#6fe4ee" strokeWidth="3" strokeDasharray="6 6" />
    <g fill="none" stroke={Y} strokeWidth="3.300">
      <path d="M57 456L812 290 1030 958 278 1125z" />
      <path d="M65 464L806 298M68 462L285 1116M285 1116L1020 956" strokeDasharray="12 4" />
      <path d="M812 290L1080 230M205 485L888 332 1080 290M205 485L175 765M888 322L1080 280" />
      <path d="M150 732L905 562M165 774L922 608M166 820L922 654" strokeWidth="5" />
      <path d="M128 737L150 732M905 562L935 559M905 562V605M922 608L918 655M165 774V820M150 732L158 774" />
      <path d="M140 797L1080 590" strokeDasharray="24 6 6 6" />
      <path d="M238 980L990 815V858L238 1025zM888 322L1080 905M960 640L1080 615M990 655L1080 637" />
      <path d="M430 335L660 1060M440 375L648 1040M588 390L555 650" strokeDasharray="26 6 6 6" />
      <path d="M345 925L338 990M526 885L518 950M687 848L680 915M870 808L863 875M373 1012L365 1078M555 970L547 1035M715 935L710 1003M897 895L890 960M535 630L540 755" strokeDasharray="22 5 5 5" />
      <path d="M1030 958L1080 950M648 1042L668 1042" />
    </g>
    <path d="M476 65L433 400 650 1072 697 740zM440 375L658 1045" fill="none" stroke={R} strokeWidth="3.300" />
  </g>
);

const Housing = () => (
  <g transform="translate(980 320) scale(.33333)" shapeRendering="crispEdges">
    <path d="M120 190L133 172 770 34 790 42 834 175V968L262 1094 52 500 78 480z" fill="#0c0c0c" />
    <path d="M120 200L78 480 150 740 262 1070 300 1040 330 765 240 500z" fill="#171717" />
    <path d="M212 560L216 640 190 762 168 690 180 620z" fill="#2a2e2e" />
    <path d="M60 500L84 500 150 740 220 950 270 1070 834 960V975L262 1094z" fill="#303434" />
    <path d="M120 190L133 172 770 34 790 42 834 175V655L352 764 310 745 268 600 236 520 205 380 178 300 135 225z" fill="#3a3e3e" />
    <path d="M180 365L213 370 216 390 200 412 190 400zM205 460L238 462 240 515 225 522zM245 545L270 548 280 590 252 595z" fill="#0c0c0c" />
    <path d="M130 230L168 248 185 250V275L168 278 148 240z" fill="#111" />
    <g fill="none" stroke="#0e0e0e" strokeWidth="8">
      <path d="M182 222L365 183M372 176L455 164 475 200 490 205M487 157L670 120M675 108L755 96 770 125" />
      <path d="M302 710V682L318 678M608 640V615L625 608" strokeWidth="4" />
    </g>
    <g fill="#0e0e0e">
      <path d="M212 195L240 185 262 192 256 210 216 216zM366 165L400 152 414 160 408 174 370 180zM517 132L545 120 570 127 562 142 520 150zM670 96L700 85 720 92 715 106 673 112z" />
      <path d="M460 185L490 182 488 210 472 205zM768 118L795 115 797 138 775 142zM812 228L834 232V274L820 262z" />
      <path d="M443 668L490 655V668L445 678zM748 602L800 592V602L750 612zM388 706L430 696V702L388 712z" />
      <path d="M307 430L470 394 495 490 482 440 318 470zM612 358L762 325 795 428 750 440 734 375 622 400z" />
      <ellipse cx="440" cy="585" rx="23" ry="21" /><ellipse cx="747" cy="518" rx="27" ry="23" />
    </g>
    <g fill="#00457c">
      <path d="M315 470L478 433 495 492 355 528 338 524zM622 400L734 375 750 438 655 461 638 455z" />
      <path d="M290 208L340 196 343 212 297 220zM367 182L408 172 412 182 372 190zM597 142L640 132 646 145 600 153zM522 150L562 140V148L526 156zM673 112L715 105V112L680 118z" />
      <path d="M425 600L445 592 455 604 440 608zM733 535L748 530 760 534 747 541z" />
    </g>
    <path d="M370 800L405 775 425 785 834 698V735L370 828z" fill="#002f5e" />
    <path d="M363 828L834 727V742L365 844zM330 1020L834 909V914L330 1025z" fill="#3a3e3e" />
    <g fill="none" stroke={Y} strokeWidth="3.300">
      <path d="M0 432L752 268 834 520M0 493L834 312M53 472L762 315 834 535M195 472L834 335M50 480L255 1097M195 472L155 790" />
      <path d="M150 790L834 640M160 803L834 665M150 780V803M65 715L95 709M190 1108L255 1097" />
      <path d="M255 1097L834 970" strokeWidth="6" />
      <path d="M80 790L834 608M182 365L175 470 135 705M242 548L195 900M268 460L257 565M395 365L615 1045M550 385L500 750M440 565L435 635M747 500L740 570M827 340L815 440" strokeDasharray="24 6 6 6" />
    </g>
    <path d="M294 115L248 445 455 1078 502 735zM446 80L400 410 608 1045 655 700zM598 48L552 380 760 1008 805 675z" fill="none" stroke={R} strokeWidth="3.300" />
    <g strokeWidth="4" shapeRendering="auto">
      <path d="M117 598L113 632" stroke="#00e000" /><path d="M113 632L182 618" stroke={R} /><path d="M113 632L132 695" stroke="#55b0ff" />
      <circle cx="117" cy="598" r="9" fill="#00f000" /><circle cx="182" cy="618" r="7" fill={R} /><circle cx="132" cy="696" r="7" fill="#55b0ff" />
    </g>
  </g>
);

const Model = () => (
  <Scene width="819" height="647" viewBox="439 166 819 647" role="img" aria-label="SPM32-A01">
    <Housing />
    <FrontPanel />
    <g fill="#fff" fontFamily='"DejaVu Sans", sans-serif' fontSize="14">
      <text x="878" y="598">Y</text><text x="908" y="606">X</text><text x="885" y="641">Z</text>
      <text x="891" y="598">PRT_CSYS_DEF</text><text x="891" y="598">SECTION</text><text x="891" y="598">ASM_DEF_CSYS</text>
      <text x="1145" y="547">Y</text><text x="1158" y="547">PRT_CSYS_DEF</text><text x="1175" y="555">X</text><text x="1152" y="591">Z</text>
    </g>
    <text transform="translate(831 515) rotate(-8)" fill="#e9eef2" fontFamily='"Liberation Serif", serif' fontWeight="bold" fontSize="21">Pilot</text>
    <text transform="translate(804 727) rotate(-11)" fill="#d5eee6" fontFamily='"Liberation Sans", sans-serif' fontSize="10">SPM32</text>
    <path d="M668 361L672 368 677 372 668 377 663 371 666 369z" fill="#ff3b36" />
  </Scene>
);

const viewTools = [
  { icon: 'zoomFit', label: '重新调整' }, { icon: 'zoomIn', label: '放大' }, { icon: 'zoomOut', label: '缩小' },
  { icon: 'repaint', label: '重画' }, { icon: 'shading', label: '显示样式' }, { icon: 'named', label: '已命名视图' },
  { icon: 'viewMgr', label: '视图管理器' }, { icon: 'datums', label: '基准显示' },
  { icon: 'annot', label: '注释显示', on: true }, { icon: 'spin', label: '旋转中心', on: true },
];

export default function App() {
  return (
    <Frame>
      <Global />
      <TitleBar>
        <QuickButton $w={18} aria-label="Creo"><Icon name="app" /></QuickButton>
        <QuickDivider />
        <QuickButton $w={26} aria-label="新建"><Icon name="newFile" /></QuickButton>
        <QuickButton $w={22} aria-label="会话"><Icon name="ball" /></QuickButton>
        <QuickButton $w={26} aria-label="打开"><Icon name="open" /></QuickButton>
        <QuickButton $w={22} aria-label="保存"><Icon name="save" /></QuickButton>
        <QuickButton $w={27} aria-label="撤消"><Icon name="undo" /></QuickButton>
        <QuickButton $w={10} aria-label="撤消列表"><Caret off /></QuickButton>
        <QuickButton $w={28} aria-label="重做"><Icon name="redo" /></QuickButton>
        <QuickButton $w={10} aria-label="重做列表"><Caret off /></QuickButton>
        <QuickButton $w={26} aria-label="重新生成"><Icon name="regenSmall" /></QuickButton>
        <QuickButton aria-label="窗口"><Icon name="windows" /></QuickButton>
        <QuickButton $w={14} aria-label="窗口列表"><Caret /></QuickButton>
        <QuickButton aria-label="关闭"><Icon name="closeDir" /></QuickButton>
        <QuickDivider />
        <QuickButton $w={22} aria-label="自定义"><Icon name="more" /></QuickButton>
        <WindowTitle>SPM32-A01 (活动的) - Creo Parametric</WindowTitle>
      </TitleBar>

      <Tabs>
        <Tab $w={55} $gap={8}>文件<Caret /></Tab>
        {tabs.map((t) => <Tab key={t.t} $w={t.w} $active={t.active}>{t.t}</Tab>)}
      </Tabs>
      <Ribbon>
        <Section label="操作" w={129}>
          <Big icon="regen" lines={['重新生成']} w={62} caret />
          <Stack $w={66} $pad={1}>
            <Small icon="copy" label="复制" off />
            <Small icon="paste" label="粘贴" off caret />
            <Small icon="del" label="删除" off caret />
          </Stack>
        </Section>
        <Section label="获取数据" w={107} pad={7}>
          <Stack $w={98}>
            <Small icon="udf" label="用户定义特征" />
            <Small icon="copyGeom" label="复制几何" />
            <Small icon="shrink" label="收缩包络" />
          </Stack>
        </Section>
        <Section label="元件" w={150}>
          <Big icon="assemble" lines={['组装']} w={47} caret />
          <Stack $w={53}>
            <Small icon="create" label="创建" />
            <Small icon="repeat" label="重复" off />
          </Stack>
          <BodyDivider />
          <Big icon="drag" lines={['拖动', '元件']} w={48} />
        </Section>
        <Section label="基准" w={151}>
          <Big icon="plane" lines={['平面']} w={46} />
          <Stack $w={59} $pad={1}>
            <Small icon="axis" label="轴" />
            <Small icon="points" label="点" caret />
            <Small icon="csys" label="坐标系" />
          </Stack>
          <Big icon="sketch" lines={['草绘']} w={45} />
        </Section>
        <Section label="切口和曲面" w={83} pad={19}>
          <Stack $w={60}>
            <Small icon="hole" label="孔" />
            <Small icon="extrude" label="拉伸" />
            <Small icon="revolve" label="旋转" />
          </Stack>
        </Section>
        <Section label="修饰符" w={59}>
          <Big icon="pattern" lines={['阵列']} w={58} caret />
        </Section>
        <Section label="模型显示" w={263}>
          <Big icon="manage" lines={['管理视图']} w={60} caret />
          <Big icon="section" lines={['截面']} w={38} caret />
          <Big icon="sphere" lines={['外观', '库']} w={42} caret />
          <Stack $w={77} $pad={3}>
            <Small icon="explode" label="分解图" />
            <Small icon="state" label="切换状况" off />
            <Small icon="editPos" label="编辑位置" />
          </Stack>
          <Big icon="display" lines={['显示样', '式']} w={40} caret />
        </Section>
        <Section label="模型意图" w={203} pad={3}>
          <Big icon="puzzle" lines={['元件', '界面']} w={40} />
          <Big icon="publish" lines={['发布', '几何']} w={40} />
          <Big icon="family" lines={['族表']} w={40} />
          <Stack $w={78} $pad={4}>
            <Small icon="params" label="参数" />
            <Small icon="symbols" label="切换符号" />
            <Small icon="relations" label="关系" />
          </Stack>
        </Section>
        <Section label="调查" w={91} pad={2}>
          <Big icon="bom" lines={['物料', '清单']} w={42} />
          <Big icon="refs" lines={['参考查', '看器']} w={42} />
        </Section>
        <Group>
          <GroupBody />
          <GroupLabel as="div" />
        </Group>
      </Ribbon>

      <Work>
        <TreePane>
          <PaneTabs>
            <PaneTab $active aria-label="模型树"><Icon name="treeTab" /></PaneTab>
            <PaneTab aria-label="文件夹浏览器"><Icon name="folders" /></PaneTab>
            <PaneTab aria-label="收藏夹"><Icon name="favorites" /></PaneTab>
          </PaneTabs>
          <PaneBody>
            <PaneHead>
              <PaneTitle>模型树</PaneTitle>
              <PaneIcon $w={24} aria-label="设置"><Icon name="tools" /></PaneIcon>
              <PaneIcon $w={18} aria-label="设置列表"><Caret /></PaneIcon>
              <PaneIcon $w={26} aria-label="显示"><Icon name="listSet" /></PaneIcon>
              <PaneIcon $w={14} aria-label="显示列表"><Caret /></PaneIcon>
            </PaneHead>
            <SearchRow>
              <SearchBox>
                <SearchInput aria-label="搜索" />
                <ClearButton aria-label="清除"><IconSlot><Icon name="cross" /></IconSlot></ClearButton>
              </SearchBox>
              <PaneIcon $w={20} aria-label="搜索选项"><Caret /></PaneIcon>
              <PaneIcon $w={25} aria-label="查找"><Icon name="find" /></PaneIcon>
              <PaneIcon $w={27} aria-label="过滤器"><Icon name="funnel" /></PaneIcon>
              <PaneIcon $w={24} aria-label="添加"><Icon name="plus" /></PaneIcon>
            </SearchRow>
            <Tree>
              <colgroup><col width="210" /><col width="52" /><col width="78" /><col /></colgroup>
              <thead><tr><th aria-label="名称" /><th>特...</th><th>特征类型</th><th aria-label="其他" /></tr></thead>
              <tbody>
                <tr><td><NodeName $depth={0}><Icon name="asm" />SPM32-A01.ASM</NodeName></td><td /><td /><td /></tr>
                {nodes.map((n) => (
                  <tr key={n.name}>
                    <td>
                      <NodeName $depth={1}>
                        <Expander>{n.open && <Icon name="expand" />}</Expander>
                        <IconSlot><Icon name={n.icon} /></IconSlot>
                        {n.mark && <Marker />}
                        {n.name}
                      </NodeName>
                    </td>
                    <td>{n.id}</td>
                    <td>{n.type}</td>
                    <td />
                  </tr>
                ))}
              </tbody>
            </Tree>
            <TreeSpace />
          </PaneBody>
        </TreePane>

        <Viewport>
          <Model />
          <ViewTools>
            {viewTools.map((t) => <ViewTool key={t.icon} aria-label={t.label} $on={t.on}><Icon name={t.icon} /></ViewTool>)}
          </ViewTools>
          <Watermark href="#forum">
            <WatermarkLogo width="59" height="62" viewBox="0 0 59 62" aria-hidden="true">
              <path d="M3 14C4 4 14 2 22 7 34 12 42 24 43 38L40 36C38 24 30 15 20 10 12 6 7 8 6 16 7 26 12 33 18 38L14 38C7 30 3 22 3 14z" fill="#14416e" />
              <path d="M38 27C44 20 54 18 57 28 59 40 50 54 40 58 33 59 30 56 29 52L33 55C42 57 52 46 53 34 53 24 46 21 38 27z" fill="#7c2348" />
              <path d="M16 37C10 41 8 48 14 50 22 51 34 46 39 35M14 36C26 33 38 32 43 40M29 53C27 49 29 44 33 40" fill="none" stroke="#3f668a" strokeWidth="2" />
            </WatermarkLogo>
            <WatermarkText><strong>野火论坛</strong>www.proewildfire.cn</WatermarkText>
          </Watermark>
        </Viewport>
      </Work>

      <Annotations width="460" height="380" viewBox="0 0 460 380" aria-hidden="true">
        <path d="M337 15L359 27 354 32 437 159 348 37 341 40zM133 302L153 317 147 320 165 367 139 325 133 327z" fill="#ff3b36" />
      </Annotations>
    </Frame>
  );
}
